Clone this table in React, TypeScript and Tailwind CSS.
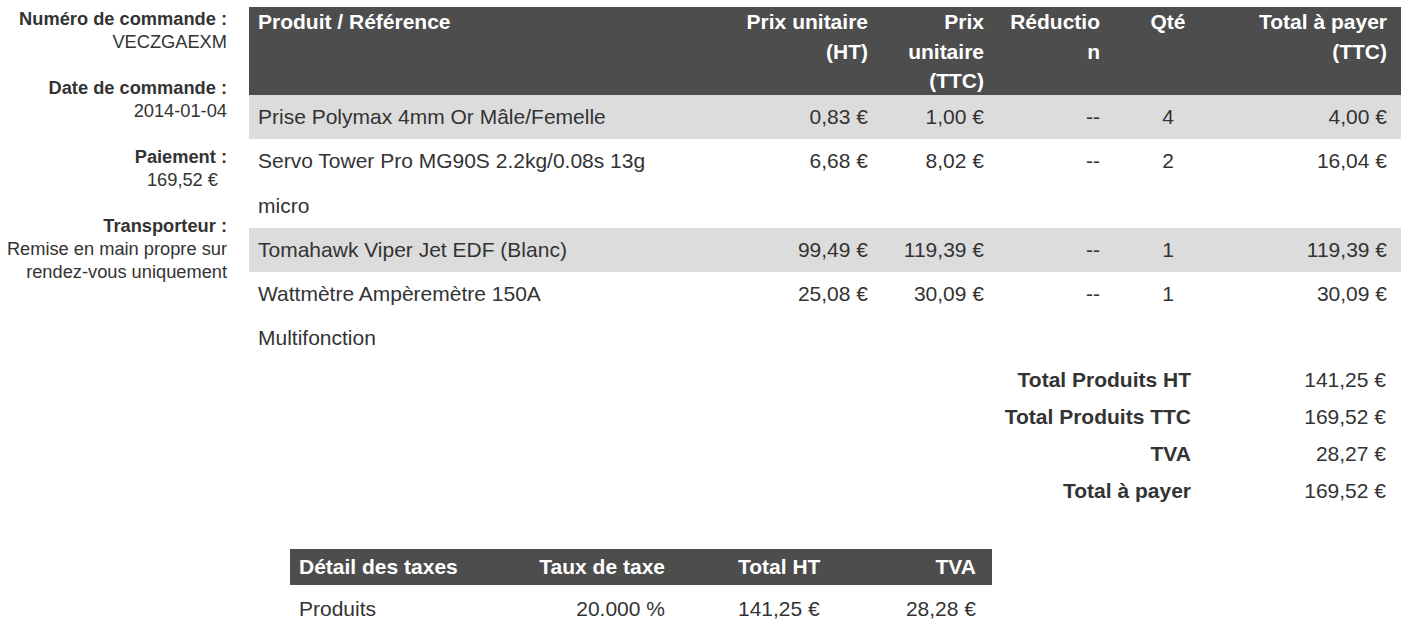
type Line = {
	name: string[];
	ht: string;
	ttc: string;
	qty: string;
	total: string;
};

const lines: Line[] = [
	{ name: ["Prise Polymax 4mm Or Mâle/Femelle"], ht: "0,83 €", ttc: "1,00 €", qty: "4", total: "4,00 €" },
	{ name: ["Servo Tower Pro MG90S 2.2kg/0.08s 13g", "micro"], ht: "6,68 €", ttc: "8,02 €", qty: "2", total: "16,04 €" },
	{ name: ["Tomahawk Viper Jet EDF (Blanc)"], ht: "99,49 €", ttc: "119,39 €", qty: "1", total: "119,39 €" },
	{ name: ["Wattmètre Ampèremètre 150A", "Multifonction"], ht: "25,08 €", ttc: "30,09 €", qty: "1", total: "30,09 €" },
];

const totals = [
	["Total Produits HT", "141,25 €"],
	["Total Produits TTC", "169,52 €"],
	["TVA", "28,27 €"],
	["Total à payer", "169,52 €"],
];

const cols = "grid grid-cols-[491px_136px_116px_116px_120px_173px]";

function InfoBlock({ label, children }: { label: string; children: React.ReactNode }) {
	return (
		<div className="mb-[23px]">
			<div className="font-bold">{label}</div>
			{children}
		</div>
	);
}

export default function App() {
	return (
		<div className="flex pt-[7px] bg-white text-[#333] font-['Liberation_Sans',Arial,sans-serif] w-[1414px] h-[636px] overflow-hidden">
			<aside className="w-[227px] shrink-0 text-right text-[18.25px] leading-[23px]">
				<InfoBlock label="Numéro de commande :">
					<div>VECZGAEXM</div>
				</InfoBlock>
				<InfoBlock label="Date de commande :">
					<div>2014-01-04</div>
				</InfoBlock>
				<InfoBlock label="Paiement :">
					<div className="pr-[9px]">169,52 €</div>
				</InfoBlock>
				<InfoBlock label="Transporteur :">
					<div>Remise en main propre sur</div>
					<div>rendez-vous uniquement</div>
				</InfoBlock>
			</aside>

			<main className="ml-[22px] w-[1152px] shrink-0 text-[21px]">
				{/* products */}
				<div className={`${cols} h-[88px] bg-[#4d4d4d] text-white font-bold leading-[29.5px]`}>
					<div className="pl-[9px]">Produit / Référence</div>
					<div className="text-right pr-[8px]">Prix unitaire<br />(HT)</div>
					<div className="text-right pr-[8px]">Prix<br />unitaire<br />(TTC)</div>
					<div className="text-right pr-[8px]">Réductio<br />n</div>
					<div className="text-center">Qté</div>
					<div className="text-right pr-[14px]">Total à payer<br />(TTC)</div>
				</div>
				{lines.map((l, i) => (
					<div key={i} className={`${cols} leading-[44.25px] ${i % 2 === 0 ? "bg-[#dcdcdc]" : ""}`}>
						<div className="pl-[9px]">
							{l.name.map((n) => (
								<div key={n}>{n}</div>
							))}
						</div>
						<div className="text-right pr-[8px]">{l.ht}</div>
						<div className="text-right pr-[8px]">{l.ttc}</div>
						<div className="text-right pr-[8px]">--</div>
						<div className="text-center">{l.qty}</div>
						<div className="text-right pr-[14px]">{l.total}</div>
					</div>
				))}

				{/* totals */}
				<div className="leading-[37px]">
					{totals.map(([label, value]) => (
						<div key={label} className="flex justify-end">
							<div className="font-bold text-right">{label}</div>
							<div className="w-[210px] text-right pr-[15px]">{value}</div>
						</div>
					))}
				</div>

				{/* taxes */}
				<div className="mt-[40px] ml-[41px] w-[702px]">
					<div className="grid grid-cols-[200px_183px_165px_154px] h-[36px] leading-[36px] bg-[#4d4d4d] text-white font-bold">
						<div className="pl-[9px]">Détail des taxes</div>
						<div className="text-right pr-[8px]">Taux de taxe</div>
						<div className="pl-[65px]">Total HT</div>
						<div className="text-right pr-[16px]">TVA</div>
					</div>
					<div className="grid grid-cols-[200px_183px_165px_154px] leading-[48px]">
						<div className="pl-[9px]">Produits</div>
						<div className="text-right pr-[8px]">20.000 %</div>
						<div className="pl-[65px]">141,25 €</div>
						<div className="text-right pr-[16px]">28,28 €</div>
					</div>
				</div>
			</main>
		</div>
	);
}
